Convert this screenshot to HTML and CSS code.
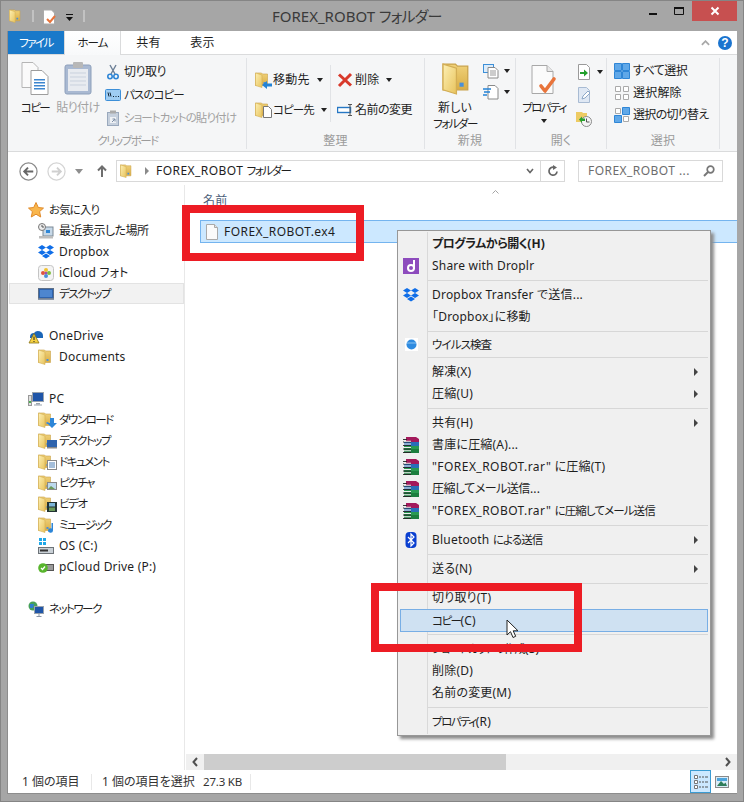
FILE: index.html
```html
<!DOCTYPE html>
<html lang="ja">
<head>
<meta charset="utf-8">
<title>FOREX_ROBOT フォルダー</title>
<link rel="stylesheet" href="styles.css">
</head>
<body>
<svg class="defs" aria-hidden="true">
  <defs>
    <linearGradient id="fy" x1="0" y1="0" x2="1" y2="1"><stop offset="0" stop-color="#fdf0b4"/><stop offset="1" stop-color="#e8c35c"/></linearGradient>
    <linearGradient id="fb" x1="0" y1="0" x2="0" y2="1"><stop offset="0" stop-color="#f0d27a"/><stop offset="1" stop-color="#d9ad45"/></linearGradient>
    <symbol id="folder" viewBox="1.500 0 13 16" preserveAspectRatio="xMinYMid meet">
      <path d="M2 1h6l1 1h5v11.500H2z" fill="url(#fb)" stroke="#c9a24a" stroke-width=".6"/>
      <path d="M2 1l6.500 2v12.500L2 13.500z" fill="url(#fy)" stroke="#d3ae55" stroke-width=".6"/>
      <rect x="10" y="10" width="2" height="2" fill="#4a90d9"/>
    </symbol>
    <symbol id="page" viewBox="0 0 16 16">
      <path d="M2.500.500h8l3 3v12h-11z" fill="#fafafa" stroke="#a9a9a9"/>
      <path d="M10.500.500v3h3" fill="#e4e4e4" stroke="#a9a9a9"/>
    </symbol>
    <symbol id="check" viewBox="0 0 28 30">
      <path d="M2 .500h15l6 6v22H2z" fill="#fbfbfb" stroke="#a8a8a8"/>
      <path d="M17 .500v6h6" fill="#e8e8e8" stroke="#a8a8a8"/>
      <path d="M11 21l4 5 9-12" fill="none" stroke="#e8743b" stroke-width="3.600" stroke-linecap="round" stroke-linejoin="round"/>
    </symbol>
    <symbol id="dropbox" viewBox="0 0 16 14">
      <path d="M4 0l4 2.500L4 5 0 2.500zM12 0l4 2.500L12 5 8 2.500zM4 5l4 2.500L4 10 0 7.500zM12 5l4 2.500L12 10 8 7.500zM8 8.500l4 2.500-4 2.500L4 11z" fill="#0f6ee8"/>
    </symbol>
    <symbol id="rar" viewBox="0 0 16 16">
      <path d="M3 0h10l3 2v3H3z" fill="#a3195b"/>
      <rect x="1" y="5" width="15" height="4" fill="#2a6fb8"/>
      <rect x="1" y="9" width="15" height="3" fill="#2a9a52"/>
      <rect x="1" y="12" width="15" height="4" fill="#1d7e3f"/>
      <path d="M0 2.500h4M0 5h8M0 8.500h8M0 12h8M0 15.500h8" stroke="#222" stroke-width=".9"/>
      <path d="M1 4.200h7M1 7h7M1 10.500h7M1 13.700h7" stroke="#eee" stroke-width="1.100"/>
    </symbol>
    <symbol id="grid" viewBox="0 0 16 16">
      <path d="M.500.500h7v7h-7zM8.500.500h7v7h-7zM.500 8.500h7v7h-7zM8.500 8.500h7v7h-7z" fill="#60a8e8" stroke="#2f86d6"/>
    </symbol>
  </defs>
</svg>

<div class="window">
  <header class="titlebar">
    <div class="qat">
      <svg class="i14"><use href="#folder"/></svg>
      <span class="qsep"></span>
      <svg class="i16" viewBox="0 0 16 16"><path d="M1.500 1h8l3 3v11h-11z" fill="#fff" stroke="#aaa"/><path d="M5 10l3 3 5-6" fill="none" stroke="#e8743b" stroke-width="2"/></svg>
      <svg class="qcaret" viewBox="0 0 7 7"><path d="M0 0h7v1H0zM0 3h7L3.500 7z" fill="#111"/></svg>
      <span class="qsep"></span>
    </div>
    <div class="wintitle">FOREX_ROBOT <span class="tk">フォルダー</span></div>
    <div class="winbtns">
      <span class="wb"><svg class="wbi" viewBox="0 0 10 10"><rect x="1" y="7" width="8" height="2" fill="#111"/></svg></span>
      <span class="wb"><svg class="wbi" viewBox="0 0 10 10"><path d="M.500 1.500h9v7h-9z" fill="none" stroke="#111"/><rect x="0" y="1" width="10" height="2" fill="#111"/></svg></span>
      <span class="wb close"><svg class="wbi" viewBox="0 0 10 10"><path d="M1.500 1.500l7 7M8.500 1.500l-7 7" stroke="#fff" stroke-width="2"/></svg></span>
    </div>
  </header>

  <main class="client">
    <nav class="tabs">
      <span class="tab file"><span class="kn">ファイル</span></span>
      <span class="tab home"><span class="km">ホーム</span></span>
      <span class="tab share">共有</span>
      <span class="tab view">表示</span>
      <span class="tabs-end">
        <svg class="chev-up" viewBox="0 0 10 6"><path d="M1 5l4-4 4 4" fill="none" stroke="#a8a8a8" stroke-width="2"/></svg>
        <span class="help">?</span>
      </span>
    </nav>

    <section class="ribbon">
      <div class="group g-clip">
        <div class="gbody">
          <div class="lg lg-copy">
            <svg class="lgi" viewBox="0 0 28 33"><path d="M1 .500h11l5 5v20H1z" fill="#fafafa" stroke="#b5b5b5"/><path d="M10 8.500h11l6 6v18H10z" fill="#fff" stroke="#9d9d9d"/><path d="M13 17h11v1.500H13zM13 20h11v1.500H13zM13 23h11v1.500H13zM13 26h11v1.500H13z" fill="#3d86cf"/></svg>
            <span class="lbl kn">コピー</span>
          </div>
          <div class="lg lg-paste dis">
            <svg class="lgi" viewBox="0 0 28 33"><rect x="1" y="3" width="26" height="29" rx="2" fill="#a9b9d2" stroke="#8ea0bb"/><rect x="4" y="7" width="20" height="22" fill="#e8ebf0"/><rect x="9" y="0" width="10" height="6" rx="1" fill="#b8b8b8"/><path d="M6 11h16M6 15h16M6 19h16M6 23h16" stroke="#c9d1dd"/></svg>
            <span class="lbl ks">貼り付け</span>
          </div>
          <div class="smcol clip-col">
            <div class="sm">
              <svg class="i16" viewBox="0 0 16 16"><path d="M5 1l5 9M11 1L6 10" stroke="#6c7f96" stroke-width="1.400"/><circle cx="5" cy="12.500" r="2.200" fill="none" stroke="#2f86d6" stroke-width="1.600"/><circle cx="11" cy="12.500" r="2.200" fill="none" stroke="#2f86d6" stroke-width="1.600"/></svg>
              <span class="ks">切り取り</span>
            </div>
            <div class="sm">
              <svg class="i16" viewBox="0 0 16 16"><rect x=".5" y="2.500" width="15" height="11" rx="1" fill="#9fcdf3" stroke="#3c8fd8"/><path d="M3 5.500l1 4M5 5.500l1 4M8 9.500h1M10.500 9.500h1M13 9.500h1" stroke="#123" stroke-width="1"/></svg>
              <span class="km">パスのコピー</span>
            </div>
            <div class="sm dis">
              <svg class="i16" viewBox="0 0 16 16"><rect x="2.500" y="2.500" width="11" height="13" fill="#c6d0dd" stroke="#9aa9bd"/><rect x="5" y=".5" width="6" height="3" fill="#aaa"/><path d="M5 7h6v6H5z" fill="#eef1f5"/><path d="M7 12l3-3M7.500 9H10v2.500" fill="none" stroke="#7c8ea6"/></svg>
              <span class="km">ショートカットの貼り付け</span>
            </div>
          </div>
        </div>
        <div class="glabel"><span class="kn">クリップボード</span></div>
      </div>

      <div class="group g-org">
        <div class="gbody">
          <div class="col2 org-a">
            <div class="row30"><svg class="i16"><use href="#folder"/></svg><svg class="ov" viewBox="0 0 10 10"><path d="M0 5l5-4v2.500h5v3H5V9z" fill="#2383d6"/></svg><span>移動先</span><i class="caret"></i></div>
            <div class="row30"><svg class="i16"><use href="#folder"/></svg><svg class="ov ovpage" viewBox="0 0 10 12"><path d="M1.500.500h5l3 3v8h-8z" fill="#fff" stroke="#777"/></svg><span class="km">コピー先</span><i class="caret"></i></div>
          </div>
          <span class="vline"></span>
          <div class="col2 org-b">
            <div class="row30"><svg class="i16" viewBox="0 0 16 16"><path d="M2 2.500l12 11M14 2l-12 12" stroke="#d8392b" stroke-width="3"/></svg><span>削除</span><i class="caret"></i></div>
            <div class="row30"><svg class="i16" viewBox="0 0 16 16"><rect x=".5" y="5.500" width="13" height="5" fill="#fff" stroke="#2677c4" stroke-width="1.400"/><path d="M11 2.500h4M13 2.500v11M11 13.500h4" stroke="#555" fill="none"/></svg><span class="ks">名前の変更</span></div>
          </div>
        </div>
        <div class="glabel">整理</div>
      </div>

      <div class="group g-new">
        <div class="gbody">
          <div class="lg lg-new">
            <svg class="lgi lgf"><use href="#folder"/></svg>
            <span class="lbl">新しい<br><span class="kn">フォルダー</span></span>
          </div>
          <div class="smcol new-col">
            <div class="sm21"><svg class="i16" viewBox="0 0 16 16"><rect x=".5" y="1.500" width="10" height="8" fill="#dcecfa" stroke="#3c8fd8"/><path d="M5 4.500h7l3 3v7.500H5z" fill="#fff" stroke="#8a8a8a"/><path d="M7 8h6M7 10h6M7 12h6" stroke="#999"/></svg><i class="caret"></i></div>
            <div class="sm21"><svg class="i16" viewBox="0 0 16 16"><path d="M5 1.500h7l3 3v10.500H5z" fill="#fff" stroke="#8a8a8a"/><path d="M0 5h8M1 8h6M0 11h4" stroke="#2383d6" stroke-width="1.300"/></svg><i class="caret"></i></div>
          </div>
        </div>
        <div class="glabel">新規</div>
      </div>

      <div class="group g-open">
        <div class="gbody">
          <div class="lg lg-prop">
            <svg class="lgi prop-i"><use href="#check"/></svg>
            <span class="lbl kn">プロパティ</span>
            <i class="caret prop-caret"></i>
          </div>
          <div class="smcol open-col">
            <div class="sm235"><svg class="i16" viewBox="0 0 16 16"><path d="M2.500.5h8l3 3v12h-11z" fill="#fff" stroke="#9a9a9a"/><path d="M4 8h4V5.500l4 3.500-4 3.500V10H4z" fill="#22a02c"/></svg><i class="caret"></i></div>
            <div class="sm235"><svg class="i16" viewBox="0 0 16 16"><path d="M2.500.5h8l3 3v12h-11z" fill="#dfe8f4" stroke="#a8bbd3"/><path d="M6 12l1-3 5-5 2 2-5 5z" fill="#fff" stroke="#8ea8c8"/></svg></div>
            <div class="sm235"><svg class="i16" viewBox="0 0 16 16"><path d="M0 1h6l1 1h4v9H0z" fill="#edcb63"/><circle cx="10.500" cy="10.500" r="5" fill="#f4f4f4" stroke="#8a8a8a"/><path d="M10.500 7.500v3.500h3" fill="none" stroke="#555"/><path d="M3 8.500l3-3v2h3v2.500H6v2z" fill="#29a22f"/></svg></div>
          </div>
        </div>
        <div class="glabel">開く</div>
      </div>

      <div class="group g-sel">
        <div class="gbody">
          <div class="smcol">
            <div class="sm22"><svg class="i16"><use href="#grid"/></svg><span class="ks">すべて選択</span></div>
            <div class="sm22"><svg class="i16" viewBox="0 0 16 16"><path d="M1.500 1.500h5v5h-5zM9.500 1.500h5v5h-5zM1.500 9.500h5v5h-5zM9.500 9.500h5v5h-5z" fill="#fff" stroke="#aaa"/></svg><span>選択解除</span></div>
            <div class="sm22"><svg class="i16" viewBox="0 0 16 16"><path d="M1.500 1.500h5v5h-5zM9.500 9.500h5v5h-5z" fill="#fff" stroke="#aaa"/><path d="M8.500.5h7v7h-7zM.5 8.500h7v7h-7z" fill="#60a8e8" stroke="#2f86d6"/></svg><span class="kt">選択の切り替え</span></div>
          </div>
        </div>
        <div class="glabel">選択</div>
      </div>
    </section>

    <section class="addressbar">
      <svg class="nav-round" viewBox="0 0 20 20"><circle cx="10" cy="10" r="9" fill="#fff" stroke="#8a8a8a" stroke-width="1.300"/><path d="M15 10H6M9.500 6L5.500 10l4 4" fill="none" stroke="#666" stroke-width="2"/></svg>
      <svg class="nav-round fwd" viewBox="0 0 20 20"><circle cx="10" cy="10" r="9" fill="#fff" stroke="#d4d4d4" stroke-width="1.300"/><path d="M5 10h9M10.500 6l4 4-4 4" fill="none" stroke="#cfcfcf" stroke-width="2"/></svg>
      <svg class="nav-down" viewBox="0 0 8 5"><path d="M0 0h8L4 5z" fill="#8e8e8e"/></svg>
      <svg class="nav-up" viewBox="0 0 10 12"><path d="M5 12V2M1 5.500L5 1.500l4 4" fill="none" stroke="#6e6e6e" stroke-width="2"/></svg>
      <div class="addr">
        <svg class="i14"><use href="#folder"/></svg>
        <svg class="addr-arrow" viewBox="0 0 4 8"><path d="M0 0l4 4-4 4z" fill="#8a8a8a"/></svg>
        <span class="addr-text"><span class="name">FOREX_ROBOT</span> <span class="kn">フォルダー</span></span>
        <svg class="addr-chev" viewBox="0 0 8 6"><path d="M1 1l3 3.500L7 1" fill="none" stroke="#666" stroke-width="1.600"/></svg>
        <span class="addr-refresh"><svg class="i12" viewBox="0 0 12 12"><path d="M10 6.500A4 4 0 1 1 7 2.300" fill="none" stroke="#666" stroke-width="1.700"/><path d="M6 0l4 2.500L6 5z" fill="#666"/></svg></span>
      </div>
      <div class="search">
        <span class="search-text name">FOREX_ROBOT ...</span>
        <svg class="i12" viewBox="0 0 12 12"><circle cx="7.500" cy="4.500" r="3.300" fill="none" stroke="#777" stroke-width="1.700"/><path d="M5 7l-4 4" stroke="#777" stroke-width="2"/></svg>
      </div>
    </section>

    <section class="content">
      <aside class="sidebar">
        <div class="nav n0"><svg class="i16" viewBox="0 0 16 16"><path d="M8 .5l2.300 5 5.200.6-3.900 3.500 1.100 5.400L8 12.200 3.300 15l1.100-5.400L.5 6.100l5.200-.6z" fill="#f9b64c" stroke="#e08a2a"/></svg><span class="km">お気に入り</span></div>
        <div class="nav n1"><svg class="i16" viewBox="0 0 16 16"><rect x="5" y="4" width="10" height="9" fill="#c6d8e8" stroke="#7d8a96"/><circle cx="4" cy="4" r="3.500" fill="#eee" stroke="#777"/><path d="M4 2v2h2" fill="none" stroke="#555"/><rect x="1" y="13" width="14" height="2.500" fill="#bdbdbd"/><rect x="8" y="7" width="4" height="3" fill="#2f86d6"/></svg><span class="ks">最近表示した場所</span></div>
        <div class="nav n1"><svg class="i16 dbx"><use href="#dropbox"/></svg><span>Dropbox</span></div>
        <div class="nav n1"><svg class="i16" viewBox="0 0 16 16"><rect x=".5" y=".5" width="15" height="15" rx="3" fill="#f4f4f4" stroke="#c4c4c4"/><circle cx="8" cy="5" r="2" fill="#f2c230"/><circle cx="11" cy="8" r="2" fill="#7fbf3f"/><circle cx="8" cy="11" r="2" fill="#4a8fd8"/><circle cx="5" cy="8" r="2" fill="#e0533c"/><circle cx="8" cy="8" r="1.300" fill="#a34fb3"/></svg><span>iCloud フォト</span></div>
        <div class="nav n1 active"><svg class="i16" viewBox="0 0 16 16"><rect x=".5" y="2.500" width="15" height="10" fill="#2e63ad" stroke="#5d6f87"/><rect x="2" y="4" width="12" height="7" fill="#4d86cf"/><rect x="0" y="12.500" width="16" height="1.500" fill="#8a96a6"/></svg><span class="kn">デスクトップ</span></div>
        <div class="gap"></div>
        <div class="nav n0"><svg class="i16" viewBox="0 0 16 16"><path d="M2 9a4 4 0 0 1 4-4 5 5 0 0 1 9 3v2H2z" fill="#1b66b8"/><path d="M6 5.500L11 15H1z" fill="#f6d142" stroke="#8a7415" stroke-width=".8"/><path d="M6 8.500v3.500M6 13v1" stroke="#222"/></svg><span>OneDrive</span></div>
        <div class="nav n1"><svg class="i16"><use href="#folder"/></svg><span>Documents</span></div>
        <div class="gap"></div>
        <div class="nav n0"><svg class="i16" viewBox="0 0 16 16"><rect x="4.500" y="1.500" width="11" height="9" fill="#1f55a8" stroke="#9aa3ad"/><path d="M8 12h4v1.500H8z" fill="#9aa3ad"/><rect x="6" y="13.500" width="8" height="1" fill="#9aa3ad"/><rect x=".5" y="4.500" width="3" height="10" fill="#e0e0e0" stroke="#999"/><rect x="1" y="10" width="2" height="2" fill="#4caf50"/></svg><span>PC</span></div>
        <div class="nav n1"><span class="fi"><svg class="i16"><use href="#folder"/></svg><svg class="fo" viewBox="0 0 10 10"><path d="M3 0h4v5h3L5 10 0 5h3z" fill="#2d86d8"/></svg></span><span class="kn">ダウンロード</span></div>
        <div class="nav n1"><span class="fi"><svg class="i16"><use href="#folder"/></svg><svg class="fo" viewBox="0 0 10 10"><rect y="1" width="10" height="7" fill="#2e63ad"/><rect y="8" width="10" height="1.500" fill="#888"/></svg></span><span class="kn">デスクトップ</span></div>
        <div class="nav n1"><span class="fi"><svg class="i16"><use href="#folder"/></svg><svg class="fo" viewBox="0 0 10 10"><rect x=".5" y=".5" width="9" height="9" fill="#fff" stroke="#888"/><path d="M2 3h6M2 5h6M2 7h6" stroke="#4a7fb5"/></svg></span><span class="kn">ドキュメント</span></div>
        <div class="nav n1"><span class="fi"><svg class="i16"><use href="#folder"/></svg><svg class="fo" viewBox="0 0 10 10"><rect x=".5" y="1.500" width="9" height="7" fill="#bcd9ee" stroke="#888"/><path d="M1 8l3-3 4 3z" fill="#6a9a5a"/></svg></span><span class="kn">ピクチャ</span></div>
        <div class="nav n1"><span class="fi"><svg class="i16"><use href="#folder"/></svg><svg class="fo" viewBox="0 0 10 10"><rect y="0" width="10" height="10" fill="#233"/><rect x="2" y="1" width="6" height="3.500" fill="#7cb5d8"/><rect x="2" y="5.500" width="6" height="3.500" fill="#6a9a5a"/></svg></span><span class="kn">ビデオ</span></div>
        <div class="nav n1"><span class="fi"><svg class="i16"><use href="#folder"/></svg><svg class="fo" viewBox="0 0 10 10"><path d="M6 0v7.500a2.500 2.200 0 1 1-1.500-2V0z" fill="#2d86d8"/></svg></span><span class="kn">ミュージック</span></div>
        <div class="nav n1"><svg class="i16" viewBox="0 0 16 16"><path d="M1 0h3v3H1zM5 0h3v3H5zM1 4h3v3H1zM5 4h3v3H5z" fill="#1ea7e8"/><rect x=".5" y="9.500" width="15" height="6" fill="#c9d0d6" stroke="#6d7378"/><path d="M2 12.500h8" stroke="#333" stroke-width="2"/></svg><span>OS (C:)</span></div>
        <div class="nav n1"><svg class="i16" viewBox="0 0 16 16"><rect x="5" y="5.500" width="10.500" height="6" fill="#9a9a9a" stroke="#555"/><circle cx="5" cy="9" r="4.800" fill="#58b52d"/><path d="M3 9l1.500 1.500L7 7.500" fill="none" stroke="#fff" stroke-width="1.300"/></svg><span>pCloud Drive (P:)</span></div>
        <div class="gap"></div>
        <div class="nav n0"><svg class="i16" viewBox="0 0 16 16"><circle cx="5" cy="5" r="4.500" fill="#46a05a"/><path d="M2 3h4l-1 4H2z" fill="#2c7fd0"/><rect x="6.500" y="5.500" width="9" height="7" fill="#1f55a8" stroke="#9aa3ad"/><path d="M11 12.500v3M8.500 15.500h5" stroke="#8a96a6"/></svg><span class="kn">ネットワーク</span></div>
      </aside>

      <div class="files">
        <div class="colhead">
          <svg class="sort" viewBox="0 0 7 4"><path d="M.5 3.500L3.500.5l3 3" fill="none" stroke="#a4a4a4"/></svg>
          <span class="colname">名前</span>
        </div>
        <div class="filerow">
          <svg class="i16"><use href="#page"/></svg>
          <span class="name">FOREX_ROBOT.ex4</span>
        </div>
        <div class="hscroll">
          <svg class="sarrow" viewBox="0 0 6 10"><path d="M5 1L1.500 5 5 9" fill="none" stroke="#505050" stroke-width="2"/></svg>
          <div class="strack"><div class="sthumb"></div></div>
          <svg class="sarrow" viewBox="0 0 6 10"><path d="M1 1l3.500 4L1 9" fill="none" stroke="#505050" stroke-width="2"/></svg>
        </div>
      </div>
    </section>

    <footer class="status">
      <span class="st st1">1 個の項目</span>
      <span class="st st2">1 個の項目を選択</span>
      <span class="st st3">27.3 KB</span>
      <span class="views">
        <span class="vbtn on"><svg class="i16" viewBox="0 0 16 16"><path d="M1.500 1.500h3v3h-3zM1.500 6.500h3v3h-3zM1.500 11.500h3v3h-3z" fill="#fff" stroke="#777"/><path d="M6 3h2M9 3h2M12 3h3M6 8h2M9 8h2M12 8h3M6 13h2M9 13h2M12 13h3" stroke="#555"/></svg></span>
        <span class="vbtn"><svg class="i14" viewBox="0 0 14 14"><rect x=".5" y="1.500" width="13" height="11" fill="#d9ecf8" stroke="#8a8a8a"/><path d="M2 11l4-5 3 3 1.500-1.500L12 11z" fill="#2e7d5a"/><rect x="2" y="3" width="10" height="3" fill="#4da4dc"/></svg></span>
      </span>
    </footer>
  </main>

  <div class="menu">
    <div class="item bold"><span class="mi"></span><span class="mt"><span class="ks">プログラムから開く</span>(H)</span></div>
    <div class="item"><span class="mi"><svg class="i16" viewBox="0 0 16 16"><rect width="16" height="16" fill="#8d4bbd"/><path d="M11 2v9" stroke="#fff" stroke-width="2"/><circle cx="8" cy="10" r="3" fill="none" stroke="#fff" stroke-width="2"/></svg></span><span class="mt">Share with Droplr</span></div>
    <div class="sep"></div>
    <div class="item"><span class="mi"><svg class="i16"><use href="#dropbox"/></svg></span><span class="mt">Dropbox Transfer で送信...</span></div>
    <div class="item"><span class="mi"></span><span class="mt">「Dropbox」に移動</span></div>
    <div class="sep"></div>
    <div class="item short"><span class="mi"><svg class="i16" viewBox="0 0 16 16"><rect x="2" y="1" width="13" height="13" fill="#fff"/><circle cx="8.500" cy="7.500" r="5" fill="#2f8be0"/><path d="M4 6h9" stroke="#8cc4f2"/></svg></span><span class="mt"><span class="km">ウイルス検査</span></span></div>
    <div class="sep"></div>
    <div class="item"><span class="mi"></span><span class="mt">解凍(X)</span><i class="tri"></i></div>
    <div class="item"><span class="mi"></span><span class="mt">圧縮(U)</span><i class="tri"></i></div>
    <div class="sep"></div>
    <div class="item"><span class="mi"></span><span class="mt">共有(H)</span><i class="tri"></i></div>
    <div class="item"><span class="mi"><svg class="i16"><use href="#rar"/></svg></span><span class="mt">書庫に圧縮(A)...</span></div>
    <div class="item"><span class="mi"><svg class="i16"><use href="#rar"/></svg></span><span class="mt"><span class="name">"FOREX_ROBOT.rar"</span> に圧縮(T)</span></div>
    <div class="item"><span class="mi"><svg class="i16"><use href="#rar"/></svg></span><span class="mt"><span class="ks">圧縮してメール送信</span>...</span></div>
    <div class="item"><span class="mi"><svg class="i16"><use href="#rar"/></svg></span><span class="mt"><span class="name">"FOREX_ROBOT.rar"</span> <span class="km">に圧縮してメール送信</span></span></div>
    <div class="sep"></div>
    <div class="item"><span class="mi"><svg class="i16" viewBox="0 0 16 16"><rect x="2.500" y="0" width="11" height="16" rx="4" fill="#0a3fd0"/><path d="M5 5l6 6-3 3V2l3 3-6 6" fill="none" stroke="#fff" stroke-width="1.200"/></svg></span><span class="mt">Bluetooth <span class="km">による送信</span></span><i class="tri"></i></div>
    <div class="sep"></div>
    <div class="item"><span class="mi"></span><span class="mt">送る(N)</span><i class="tri"></i></div>
    <div class="sep"></div>
    <div class="item tall"><span class="mi"></span><span class="mt">切り取り(T)</span></div>
    <div class="item tall selected"><span class="mi"></span><span class="mt"><span class="kn">コピー</span>(C)</span></div>
    <div class="sep sep6"></div>
    <div class="item"><span class="mi"></span><span class="mt"><span class="km">ショートカットの作成</span>(S)</span></div>
    <div class="item"><span class="mi"></span><span class="mt">削除(D)</span></div>
    <div class="item"><span class="mi"></span><span class="mt">名前の変更(M)</span></div>
    <div class="sep"></div>
    <div class="item"><span class="mi"></span><span class="mt"><span class="kn">プロパティ</span>(R)</span></div>
  </div>

  <div class="mark mark-file"></div>
  <div class="mark mark-copy"></div>
  <svg class="cursor" viewBox="0 0 13 20"><path d="M1 1v15l3.500-3.300L7 18.500l2.700-1.200-2.500-5.500h4.800z" fill="#fff" stroke="#222" stroke-width="1"/></svg>
</div>
</body>
</html>
```

FILE: styles.css
```css
* { box-sizing: border-box; }
html, body { margin: 0; padding: 0; }
body {
  width: 744px;
  height: 802px;
  overflow: hidden;
  font-family: "Noto Sans", "Noto Sans CJK JP", sans-serif;
  font-size: 12px;
  font-feature-settings: "palt";
  letter-spacing: .2px;
  color: #1e1e1e;
  line-height: 16px;
}
svg { display: block; flex: none; }
.defs { width: 0; height: 0; position: absolute; }
.i12 { width: 12px; height: 12px; }
.i14 { width: 14px; height: 14px; }
.i16 { width: 16px; height: 16px; }

/* Japanese text widths: the original UI font sets kana much tighter */
.kn { font-size: 11.500px; letter-spacing: -1.500px; }
.km { font-size: 11.500px; letter-spacing: -.9px; }
.ks { letter-spacing: -.5px; }
.kt { letter-spacing: -.7px; }
.name { letter-spacing: .45px; }

.window {
  position: relative;
  width: 744px;
  height: 802px;
  background: #a6a6a6;
  border: 1px solid #858585;
  padding: 0 6px 7px;
  display: flex;
  flex-direction: column;
}

/* title bar */
.titlebar { height: 30px; display: flex; flex: none; position: relative; }
.qat { display: flex; align-items: flex-start; padding: 8px 0 0 2px; width: 90px; }
.qat .i16 { margin-left: 8px; }
.qsep { width: 2px; height: 12px; margin: 1px 0 0 9px; background: #c2c2c2; }
.qat .i16 + .qcaret { margin-left: 8px; margin-top: 5px; }
.qcaret { width: 7px; height: 7px; }
.qcaret + .qsep { margin-left: 10px; }
.wintitle { flex: 1; padding: 6px 0 0 175px; font-size: 15px; line-height: 18px; color: #3a3a3a; white-space: nowrap; letter-spacing: 0; }
.tk { letter-spacing: -.8px; }
.winbtns { display: flex; height: 20px; align-items: stretch; }
.wb { width: 26px; display: flex; align-items: center; justify-content: center; }
.wbi { width: 10px; height: 10px; }
.wb.close { width: 45px; background: #c75050; }

/* client */
.client {
  flex: 1;
  min-height: 0;
  background: #fff;
  display: flex;
  flex-direction: column;
  border-left: 1px solid #8d8d8d;
  border-bottom: 1px solid #8d8d8d;
}
.tabs { height: 24px; flex: none; display: flex; align-items: stretch; background: #fff; border-bottom: 1px solid #dadbdc; position: relative; }
.tab { display: flex; align-items: center; justify-content: center; }
.file { width: 56px; background: #1979ca; color: #fff; }
.home { width: 57px; border: 1px solid #dadbdc; border-bottom: 0; border-top: 0; background: linear-gradient(#fff, #f8f9fa); margin-bottom: -1px; position: relative; }
.share { width: 55px; }
.view { width: 53px; }
.tabs-end { margin-left: auto; display: flex; align-items: center; gap: 8px; padding-right: 5px; }
.chev-up { width: 9px; height: 6px; }
.help { width: 14px; height: 14px; border-radius: 50%; background: #1a74cf; color: #fff; font-size: 12px; font-weight: 700; line-height: 14px; text-align: center; font-family: "Liberation Sans", sans-serif; }

.ribbon { height: 97px; flex: none; display: flex; background: #f5f6f7; border-bottom: 1px solid #dadbdc; padding-top: 3px; }
.group { display: flex; flex-direction: column; height: 91px; border-right: 1px solid #e1e3e6; flex: none; }
.gbody { flex: 1; display: flex; padding-top: 2px; min-height: 0; }
.glabel { height: 16px; line-height: 16px; text-align: center; color: #9b9b9b; white-space: nowrap; }
.g-clip { width: 239px; padding-left: 7px; }
.g-org { width: 178px; padding-left: 8px; }
.g-new { width: 91px; padding-left: 5px; }
.g-open { width: 91px; padding-left: 4px; }
.g-sel { width: 113px; padding-left: 7px; }
.g-clip .glabel { margin-right: 6px; }
.g-org .glabel { margin-right: 8px; }
.g-new .glabel { margin-right: 5px; }
.g-open .glabel { margin-right: 4px; }
.g-sel .glabel { margin-right: 7px; }

.lg { display: flex; flex-direction: column; align-items: center; text-align: center; flex: none; position: relative; }
.lgi { width: 28px; height: 33px; margin: 2px 0 5px; }
.lbl { display: block; white-space: nowrap; }
.lg-copy { width: 40px; }
.lg-paste { width: 46px; }
.lg-new { width: 50px; }
.lgf { width: 27px; height: 33px; }
.lg-prop { width: 60px; margin-left: -6px; }
.prop-i { width: 28px; height: 30px; margin: 5px 0 5px; }
.caret { display: inline-block; flex: none; width: 0; height: 0; border: 3px solid transparent; border-top: 4px solid #222; border-bottom: 0; margin-left: 5px; }
.prop-caret { margin: 3px 0 0; }
.dis { color: #a2a2a2; }

.smcol { display: flex; flex-direction: column; flex: none; }
.clip-col { margin-left: 4px; }
.sm { height: 23px; display: flex; align-items: center; gap: 3px; white-space: nowrap; }
.new-col { margin-left: 3px; }
.sm21 { height: 21px; display: flex; align-items: center; }
.open-col { margin-left: 2px; }
.sm235 { height: 23.500px; display: flex; align-items: center; }
.sm22 { height: 22px; display: flex; align-items: center; gap: 3px; white-space: nowrap; }

.col2 { display: flex; flex-direction: column; padding-top: 5px; flex: none; }
.org-a { width: 75px; }
.org-b { margin-left: 6px; }
.row30 { height: 30px; display: flex; align-items: center; gap: 2px; white-space: nowrap; position: relative; }
.ov { position: absolute; left: 7px; top: 15px; width: 10px; height: 10px; }
.ovpage { top: 11px; height: 12px; }
.vline { width: 1px; height: 57px; margin-top: 5px; background: #e1e3e6; flex: none; }

/* address bar */
.addressbar { height: 33px; flex: none; display: flex; align-items: center; padding: 5px 14px 0 11px; }
.nav-round { width: 19px; height: 19px; }
.fwd { margin-left: 9px; }
.nav-down { width: 8px; height: 5px; margin-left: 9px; }
.nav-up { width: 10px; height: 12px; margin-left: 14px; }
.addr { width: 449px; height: 22px; margin-left: 9px; border: 1px solid #d9d9d9; display: flex; align-items: center; padding-left: 3px; background: #fff; }
.addr-arrow { width: 4px; height: 8px; margin-left: 11px; }
.addr-text { margin-left: 7px; flex: 1; white-space: nowrap; }
.addr-chev { width: 8px; height: 6px; margin-right: 6px; }
.addr-refresh { width: 24px; height: 20px; border-left: 1px solid #d9d9d9; display: flex; align-items: center; justify-content: center; }
.search { width: 145px; height: 22px; margin-left: 13px; border: 1px solid #d9d9d9; display: flex; align-items: center; justify-content: space-between; padding: 0 7px 0 9px; color: #6d6d6d; }

/* content */
.content { flex: 1; min-height: 0; display: flex; }
.sidebar { width: 177px; flex: none; border-right: 1px solid #e8e8e8; padding-top: 14px; display: flex; flex-direction: column; }
.nav { height: 21px; display: flex; align-items: center; gap: 5px; white-space: nowrap; flex: none; }
.n0 { padding-left: 20px; }
.n1 { padding-left: 30px; }
.gap { height: 21px; flex: none; }
.active { margin-left: 1px; padding-left: 29px; background: #f2f2f2; box-shadow: inset 0 0 0 1px #e3e3e3; }
.dbx { padding: 1px 0; }
.fi { position: relative; width: 16px; height: 16px; flex: none; }
.fo { position: absolute; right: -3px; bottom: 0; width: 10px; height: 10px; }

.files { flex: 1; min-width: 0; display: flex; flex-direction: column; }
.colhead { height: 35px; flex: none; position: relative; padding: 8px 0 0 18px; color: #4c607a; }
.sort { position: absolute; left: 307px; top: 5px; width: 7px; height: 4px; }
.colname { display: block; }
.filerow { height: 23px; flex: none; margin-left: 15px; background: #cce8ff; border: 1px solid #74b4ef; border-right: 0; display: flex; align-items: center; gap: 4px; padding-left: 3px; }
.hscroll { margin-top: auto; height: 16px; flex: none; display: flex; align-items: center; background: #f0f0f0; margin-left: 1px; }
.sarrow { width: 6px; height: 10px; margin: 0 6px; }
.strack { flex: 1; height: 16px; }
.sthumb { width: 302px; height: 16px; background: #cdcdcd; }

/* status */
.status { height: 23px; flex: none; display: flex; align-items: center; padding-left: 14px; color: #333; }
.st { white-space: nowrap; height: 16px; letter-spacing: 0; }
.st1 { width: 70px; border-right: 1px solid #e8e8e8; margin-right: 10px; }
.st2 { width: 101px; }
.st3 { width: 48px; font-size: 11.500px; letter-spacing: -.2px; border-right: 1px solid #e8e8e8; }
.views { margin-left: auto; display: flex; align-items: center; height: 23px; padding-right: 5px; }
.vbtn { height: 23px; width: 21px; display: flex; align-items: center; justify-content: center; }
.on { background: #cce8ff; border: 1px solid #3a9bd2; }

/* context menu */
.menu {
  position: absolute;
  left: 396px;
  top: 229px;
  width: 314px;
  height: 506px;
  border: 1px solid #979797;
  padding: 2px 0;
  background: linear-gradient(#d9d9d9, #d9d9d9) 29px 1px / 1px calc(100% - 2px) no-repeat, #f0f0f0;
  box-shadow: 3px 3px 3px #8c8c8c;
  color: #1e1e1e;
}
.item { height: 22px; margin: 0 2px; border: 1px solid transparent; display: flex; align-items: center; white-space: nowrap; }
.short { height: 19px; }
.tall { height: 22px; }
.selected { height: 23px; background: #cfe1f2; border-color: #78aee5; }
.mi { width: 29px; padding-left: 2px; flex: none; }
.mt { padding-left: 2px; flex: 1; }
.bold { font-weight: 700; }
.tri { width: 0; height: 0; border: 4px solid transparent; border-left: 4px solid #444; border-right: 0; margin-right: 9px; }
.sep { height: 7px; margin: 0 2px 0 30px; padding-top: 3px; }
.sep::before { content: ""; display: block; height: 1px; background: #d7d7d7; }
.sep6 { height: 6px; padding-top: 2px; }

.mark { position: absolute; border: 8px solid #ed1c24; background: transparent; }
.mark-file { left: 181px; top: 204px; width: 182px; height: 56px; }
.mark-copy { left: 370px; top: 582px; width: 211px; height: 69px; }
.cursor { position: absolute; left: 505px; top: 618px; width: 13px; height: 20px; }
```
